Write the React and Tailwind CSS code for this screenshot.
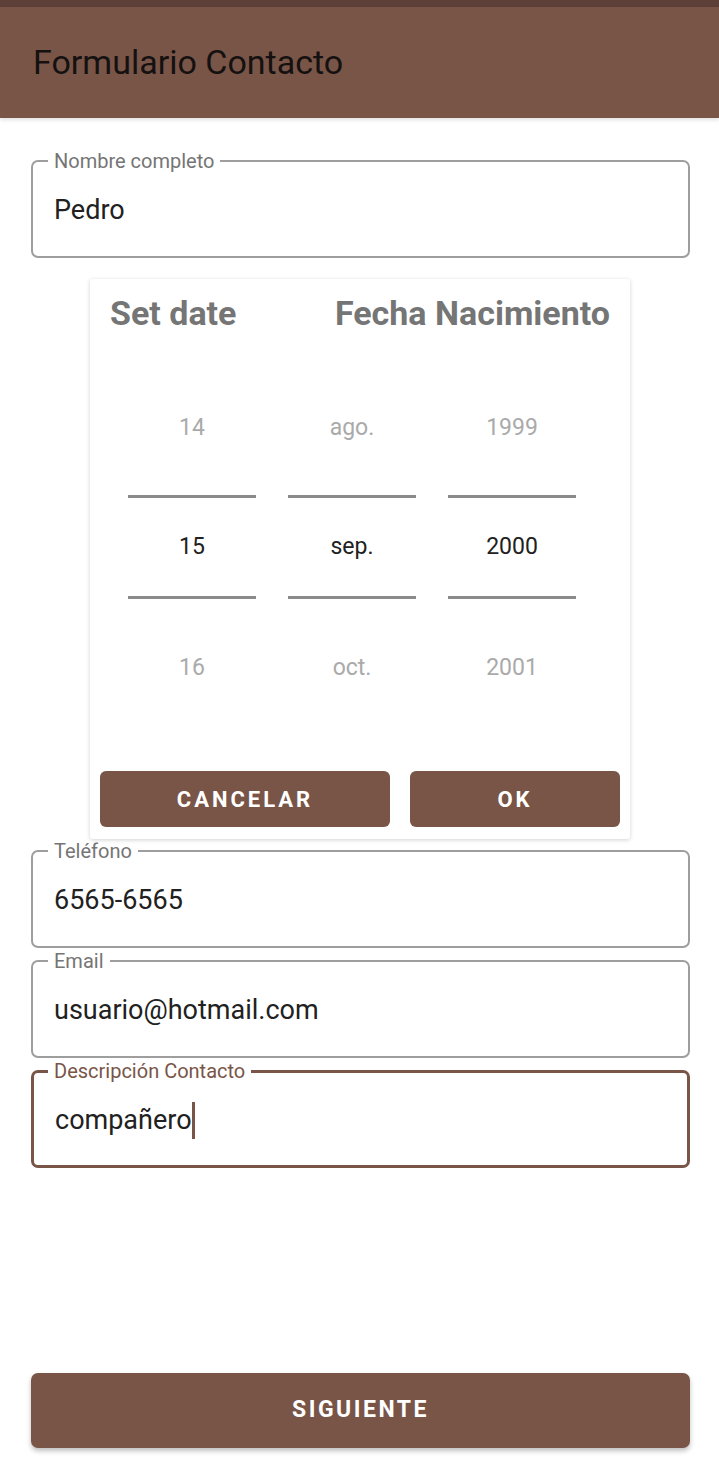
import React from "react";

const brown = "#795548";

function OutlinedField({ label, value, focused = false }) {
  return (
    <fieldset
      className={
        "rounded-[7px] px-[21px] " +
        (focused ? "border-[3px] border-[#795548] pb-[29px]" : "border-2 border-[#9e9e9e] pb-[30px]")
      }
    >
      <legend
        className={
          "px-[6px] text-[20px] leading-[24px] " +
          (focused ? "-ml-[7px] text-[#795548]" : "-ml-[6px] text-[#757575]")
        }
      >
        {label}
      </legend>
      <div className="mt-[21px] flex h-[32px] items-center text-[27px] leading-[32px] text-[#212121]">
        {value}
        {focused && <span className="inline-block h-[37px] w-[3px] bg-[#795548]" />}
      </div>
    </fieldset>
  );
}

function WheelColumn({ prev, current, next }) {
  return (
    <div className="flex w-[128px] flex-col items-center">
      <div className="flex h-[120px] items-center text-[23px] text-[#aaaaaa]">{prev}</div>
      <div className="flex h-[120px] w-full flex-col justify-between pb-[9px] pt-[7px]">
        <div className="h-[3px] w-full bg-[#8a8a8a]" />
        <div className="text-center text-[23px] text-[#212121]">{current}</div>
        <div className="h-[3px] w-full bg-[#8a8a8a]" />
      </div>
      <div className="flex h-[120px] items-center text-[23px] text-[#aaaaaa]">{next}</div>
    </div>
  );
}

export default function App() {
  return (
    <div
      className="flex min-h-[1471px] w-[719px] flex-col bg-white"
      style={{ fontFamily: "Roboto, 'Liberation Sans', sans-serif" }}
    >
      {/* Status bar + toolbar */}
      <div className="h-[7px] bg-[#5d4037]" />
      <div className="flex h-[111px] items-center bg-[#795548] px-[33px] shadow-[0_2px_4px_rgba(0,0,0,0.12)]">
        <h1 className="text-[34px] font-normal text-[#141110]">Formulario Contacto</h1>
      </div>

      <div className="flex flex-1 flex-col pl-[31px] pr-[29px]">
        <div className="mt-[31px]">
          <OutlinedField label="Nombre completo" value="Pedro" />
        </div>

        {/* Date picker dialog */}
        <div className="ml-[59px] mr-[60px] mt-[21px] flex flex-col rounded-[3px] bg-white shadow-[0_1px_4px_rgba(0,0,0,0.18)]">
          <div className="flex items-center justify-between px-[20px] pt-[14px]">
            <span className="text-[34px] font-bold leading-[40px] text-[#757575]">Set date</span>
            <span className="text-[34px] font-bold leading-[40px] text-[#757575]">Fecha Nacimiento</span>
          </div>
          <div className="mt-[35px] flex gap-[32px] pl-[38px]">
            <WheelColumn prev="14" current="15" next="16" />
            <WheelColumn prev="ago." current="sep." next="oct." />
            <WheelColumn prev="1999" current="2000" next="2001" />
          </div>
          <div className="mt-[43px] flex gap-[20px] px-[10px] pb-[12px]">
            <button className="h-[56px] w-[290px] rounded-[6px] bg-[#795548] text-[22px] font-bold tracking-[3px] text-white">
              CANCELAR
            </button>
            <button className="h-[56px] flex-1 rounded-[6px] bg-[#795548] text-[22px] font-bold tracking-[3px] text-white">
              OK
            </button>
          </div>
        </div>

        <div className="flex flex-col gap-px">
          <OutlinedField label="Teléfono" value="6565-6565" />
          <OutlinedField label="Email" value="usuario@hotmail.com" />
          <OutlinedField label="Descripción Contacto" value="compañero" focused />
        </div>

        <button
          className="mb-[23px] mt-auto h-[75px] w-full rounded-[7px] text-[23px] font-bold tracking-[2.5px] text-white shadow-[0_3px_5px_rgba(0,0,0,0.25)]"
          style={{ backgroundColor: brown }}
        >
          SIGUIENTE
        </button>
      </div>
    </div>
  );
}
